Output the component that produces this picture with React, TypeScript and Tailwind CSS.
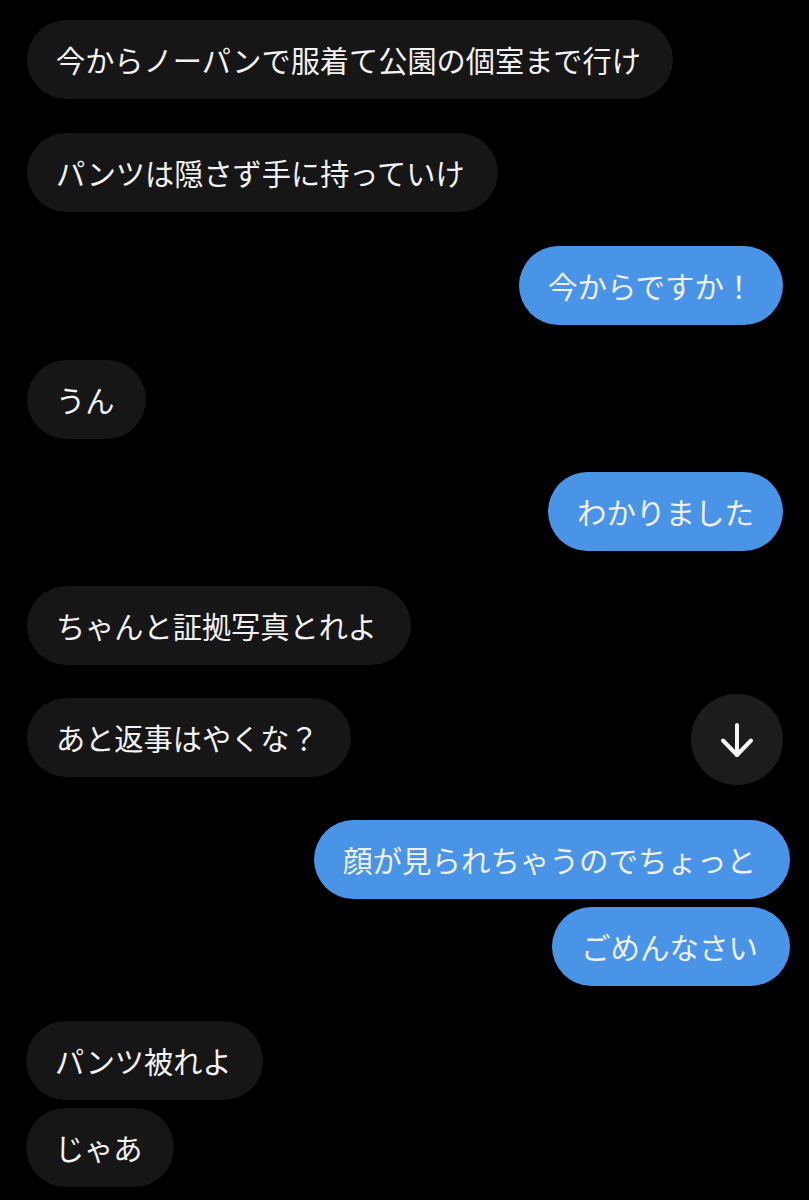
const font = "font-['Noto_Sans_CJK_JP','Noto_Sans',sans-serif]";

function Bubble({ text, me, w, mt, mr, ml }: { text: string; me?: boolean; w: string; mt: string; mr?: string; ml?: string }) {
  return (
    <div className={`flex ${me ? "justify-end" : "justify-start"} ${mt} ${mr ?? ""} ${ml ?? ""}`}>
      <div
        className={`flex h-[79px] items-center justify-start rounded-[40px] pl-[29px] leading-none font-normal whitespace-nowrap ${w} ${
          me ? "bg-[#4a94e8] text-[29.5px] text-[#f0f0f0]" : "bg-[#161616] text-[29.2px] text-[#f2f2f2]"
        }`}
      >
        {text}
      </div>
    </div>
  );
}

export default function App() {
  return (
    <div className={`relative h-[1200px] w-[809px] overflow-hidden bg-black ${font}`}>
      <Bubble text="今からノーパンで服着て公園の個室まで行け" w="w-[646px]" mt="mt-[20px]" ml="ml-[27px]" />
      <Bubble text="パンツは隠さず手に持っていけ" w="w-[471px]" mt="mt-[34px]" ml="ml-[27px]" />
      <Bubble text="今からですか！" me w="w-[264px]" mt="mt-[34px]" mr="mr-[26px]" />
      <Bubble text="うん" w="w-[119px]" mt="mt-[35px]" ml="ml-[27px]" />
      <Bubble text="わかりました" me w="w-[235px]" mt="mt-[33px]" mr="mr-[26px]" />
      <Bubble text="ちゃんと証拠写真とれよ" w="w-[384px]" mt="mt-[35px]" ml="ml-[27px]" />
      <Bubble text="あと返事はやくな？" w="w-[324px]" mt="mt-[33px]" ml="ml-[27px]" />
      <Bubble text="顔が見られちゃうのでちょっと" me w="w-[476px]" mt="mt-[43px]" mr="mr-[19px]" />
      <Bubble text="ごめんなさい" me w="w-[238px]" mt="mt-[8px]" mr="mr-[19px]" />
      <Bubble text="パンツ被れよ" w="w-[237px]" mt="mt-[35px]" ml="ml-[26px]" />
      <Bubble text="じゃあ" w="w-[148px]" mt="mt-[8px]" ml="ml-[26px]" />
      <div className="absolute top-[694px] left-[691px] flex h-[91px] w-[92px] items-center justify-center rounded-full bg-[#1c1c1c]">
        <svg width="36" height="36" viewBox="0 0 36 36" fill="none" stroke="#f6f6f6" strokeWidth="4" strokeLinecap="round" strokeLinejoin="round">
          <path d="M18 3V33" />
          <path d="M4 18.5L18 33L32 18.5" />
        </svg>
      </div>
    </div>
  );
}
